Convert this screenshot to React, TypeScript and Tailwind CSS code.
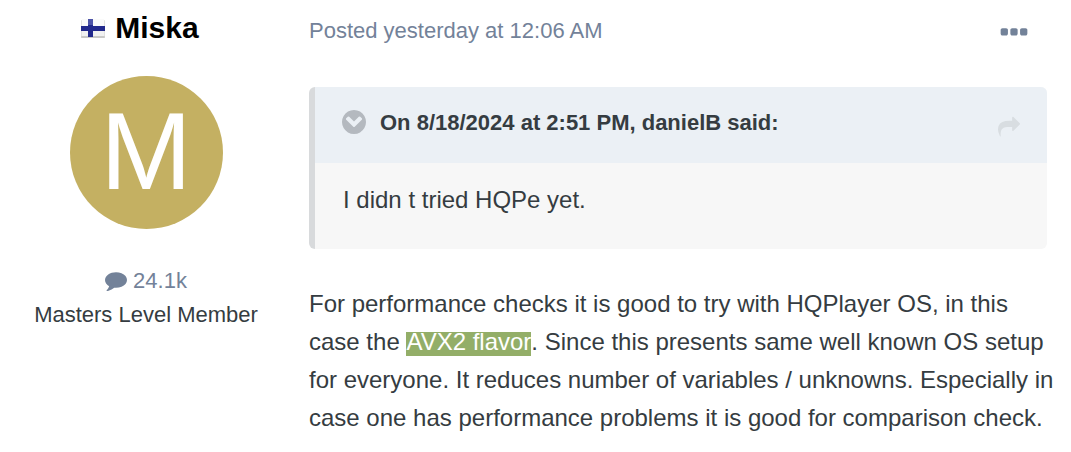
import { ReactNode } from 'react'

// Icon outlines, all on the same 1792 grid
const icons = {
  comment:
    'M1792 896q0 174-120 321.5t-326 233-450 85.5q-70 0-145-8-198 175-460 242-49 14-114 22-17 2-30.5-9t-17.5-29v-1q-3-4-.5-12t2-10 4.5-9.5l6-9 7-8.5 8-9q7-8 31-34.5t34.5-38 31-39.5 32.5-51 27-59 26-76q-157-89-247.5-220t-90.5-281q0-130 71-248.5t191-204.5 286-136.5 348-50.5q244 0 450 85.5t326 233 120 321.5z',
  ellipsis:
    'M576 736v192q0 40-28 68t-68 28h-192q-40 0-68-28t-28-68v-192q0-40 28-68t68-28h192q40 0 68 28t28 68zm512 0v192q0 40-28 68t-68 28h-192q-40 0-68-28t-28-68v-192q0-40 28-68t68-28h192q40 0 68 28t28 68zm512 0v192q0 40-28 68t-68 28h-192q-40 0-68-28t-28-68v-192q0-40 28-68t68-28h192q40 0 68 28t28 68z',
  chevronCircleDown:
    'M941 1203l454-454q19-19 19-45t-19-45l-102-102q-19-19-45-19t-45 19l-307 307-307-307q-19-19-45-19t-45 19l-102 102q-19 19-19 45t19 45l454 454q19 19 45 19t45-19zm723-307q0 209-103 385.5t-279.5 279.5-385.5 103-385.5-103-279.5-279.5-103-385.5 103-385.5 279.5-279.5 385.5-103 385.5 103 279.5 279.5 103 385.5z',
  share:
    'M1792 640q0 26-19 45l-512 512q-19 19-45 19t-45-19-19-45v-256h-224q-98 0-175.5 6t-154 21.5-133 42.5-105.5 69.5-80 101-48.5 138.5-17.5 181q0 55 5 123 0 6 2.5 23.5t2.5 26.5q0 15-8.5 25t-23.5 10q-16 0-28-17-7-9-13-22t-13.5-30-10.5-24q-127-285-127-451 0-199 53-333 162-403 875-403h224v-256q0-26 19-45t45-19 45 19l512 512q19 19 19 45z',
}

function Icon({ name, className }: { name: keyof typeof icons; className: string }) {
  return (
    <svg viewBox="0 0 1792 1792" fill="currentColor" className={className} aria-hidden="true">
      <path d={icons[name]} />
    </svg>
  )
}

function FinnishFlag() {
  return (
    <svg viewBox="0 0 24 19" className="h-[19px] w-6 shrink-0" role="img" aria-label="Finland">
      <rect y="1" width="24" height="18" rx="1" fill="#e2e2e0" />
      <rect x="1" width="22" height="12" fill="#fafafa" />
      <rect x="1" y="12" width="22" height="5" fill="#f1f1f1" />
      <rect y="17" width="24" height="2" rx="1" fill="#c9c9c7" />
      <rect y="7" width="24" height="5" fill="#22298c" />
      <rect x="7" width="5" height="18" fill="#22298c" />
      <rect x="7" width="5" height="6" fill="#4d54a8" />
    </svg>
  )
}

function AuthorPanel() {
  return (
    <aside className="flex w-[292px] shrink-0 flex-col items-center">
      <h3 className="mt-2 flex items-center gap-2.5 pr-3 text-[30px] leading-10 font-bold text-black">
        <FinnishFlag />
        <a href="#miska">Miska</a>
      </h3>
      <a
        href="#miska"
        className="mt-7 flex size-[153px] items-center justify-center rounded-full bg-[#c4b062] pb-1 text-[110px] leading-none text-white"
      >
        M
      </a>
      <ul className="mt-[35px] text-center text-[22px] leading-[34px]">
        <li>
          <a href="#posts" className="flex items-center justify-center gap-1.5 text-[#738299]">
            <Icon name="comment" className="mb-0.5 size-[22px]" />
            24.1k
          </a>
        </li>
        <li>Masters Level Member</li>
      </ul>
    </aside>
  )
}

function Quote({ title, children }: { title: string; children: ReactNode }) {
  return (
    <blockquote className="mt-10 overflow-hidden rounded-md border-l-[6px] border-[#d8dadc] bg-[#f7f7f7]">
      <div className="flex h-[76px] items-center bg-[#ebf0f5] pr-[27px] pb-1 pl-[25px] text-[22px] font-bold">
        <button type="button" aria-label="Toggle quote" className="-mt-0.5 text-[#b4b9bf]">
          <Icon name="chevronCircleDown" className="size-7" />
        </button>
        <span className="ml-3 flex-1">{title}</span>
        <a href="#quoted" aria-label="Go to quoted post" className="mt-2 text-[#d8dde1]">
          <Icon name="share" className="size-[22px]" />
        </a>
      </div>
      <p className="px-7 pt-[18px] pb-[30px]">{children}</p>
    </blockquote>
  )
}

export default function App() {
  return (
    <article className="flex bg-white font-['Liberation_Sans',Arial,sans-serif] text-[#353c41]">
      <AuthorPanel />
      <div className="min-w-0 flex-1 pr-6 pl-[17px] text-[24px] leading-[38px]">
        <header className="flex h-[47px] items-center justify-between pt-[15px] pr-4 text-[#738299]">
          <a href="#post" className="text-[22px]">Posted yesterday at 12:06 AM</a>
          <button type="button" aria-label="More options" className="pt-1">
            <Icon name="ellipsis" className="size-[34px]" />
          </button>
        </header>
        <Quote title="On 8/18/2024 at 2:51 PM, danielB said:">I didn t tried HQPe yet.</Quote>
        <p className="mt-9 -mr-3">
          For performance checks it is good to try with HQPlayer OS, in this case the{' '}
          <mark className="inline-block bg-[#93ae68] pb-1 leading-5 text-white">AVX2 flavor</mark>. Since this
          presents same well known OS setup for everyone. It reduces number of variables / unknowns. Especially in
          case one has performance problems it is good for comparison check.
        </p>
      </div>
    </article>
  )
}
